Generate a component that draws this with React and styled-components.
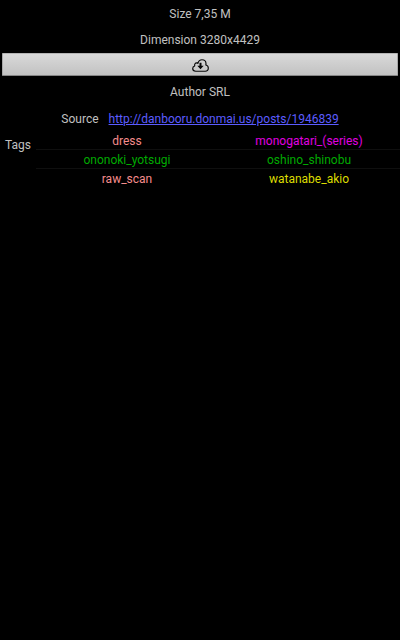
import React from "react";
import styled, { createGlobalStyle } from "styled-components";

const GlobalStyle = createGlobalStyle`
  body {
    margin: 0;
    background: #000;
  }
`;

const Screen = styled.main`
  display: flex;
  flex-direction: column;
  height: 640px;
  background: #000;
  color: #c0c0c0;
  font: 12px/14px Roboto, sans-serif;
`;

const InfoLine = styled.div`
  display: flex;
  justify-content: center;
  align-items: center;
  gap: 10px;
  height: ${({ $height }) => $height || 26}px;
`;

const DownloadButton = styled.button`
  display: flex;
  justify-content: center;
  align-items: center;
  height: 23px;
  margin: 0 2px;
  padding: 2px 0 0;
  box-sizing: border-box;
  border: 1px solid #a8a8a8;
  border-top-color: #b4b4b4;
  border-bottom-color: #858585;
  border-radius: 1px;
  background: linear-gradient(#d9d9d9, #c2c2c2);
`;

const SourceLink = styled.a`
  color: #5c5cff;
  text-decoration: underline;
`;

const TagSection = styled.section`
  display: flex;
`;

const TagLabel = styled.div`
  width: 36px;
  padding-top: 7px;
  box-sizing: border-box;
  text-align: center;
`;

const TagGrid = styled.div`
  flex: 1;
`;

const TagRow = styled.div`
  display: grid;
  grid-template-columns: 1fr 1fr;
  height: 19px;
  box-sizing: border-box;
  border-bottom: ${({ $last }) => ($last ? "0" : "1px solid #0f0f0f")};
`;

const Tag = styled.span`
  padding-top: 3px;
  text-align: center;
  color: ${({ $color }) => $color};
`;

const tagRows = [
  [["dress", "#f58c8c"], ["monogatari_(series)", "#e000e0"]],
  [["ononoki_yotsugi", "#00aa00"], ["oshino_shinobu", "#00aa00"]],
  [["raw_scan", "#f58c8c"], ["watanabe_akio", "#dcdc00"]],
];

function CloudDownload() {
  return (
    <svg width="17" height="13" viewBox="0 0 17 13" fill="none" stroke="#080808" aria-label="Download">
      <path
        strokeWidth="1.15"
        strokeLinejoin="round"
        d="M3.7 12.2C1.8 12.2.7 11.2.7 9.6c0-1.3.8-2.3 2-2.6-.4-1.7.5-3.1 2-3.1.5 0 .9.1 1.2.4C6.5 2 8 .7 10 .7c2.4 0 4 1.7 4 4 0 .5-.1.9-.2 1.3 1.5.3 2.5 1.5 2.5 3 0 1.9-1.2 3.2-3.1 3.2z"
      />
      <path fill="#080808" stroke="none" d="M7.5 3.8h2v3h2.2L8.5 10.3 5.3 6.8h2.2z" />
    </svg>
  );
}

export default function App() {
  return (
    <>
      <GlobalStyle />
      <Screen>
        <InfoLine $height={27}>Size 7,35 M</InfoLine>
        <InfoLine>Dimension 3280x4429</InfoLine>
        <DownloadButton>
          <CloudDownload />
        </DownloadButton>
        <InfoLine $height={31}>Author SRL</InfoLine>
        <InfoLine $height={24}>
          <span>Source</span>
          <SourceLink href="http://danbooru.donmai.us/posts/1946839">
            http://danbooru.donmai.us/posts/1946839
          </SourceLink>
        </InfoLine>
        <TagSection>
          <TagLabel>Tags</TagLabel>
          <TagGrid>
            {tagRows.map((row, i) => (
              <TagRow key={row[0][0]} $last={i === tagRows.length - 1}>
                {row.map(([name, color]) => (
                  <Tag key={name} $color={color}>{name}</Tag>
                ))}
              </TagRow>
            ))}
          </TagGrid>
        </TagSection>
      </Screen>
    </>
  );
}
